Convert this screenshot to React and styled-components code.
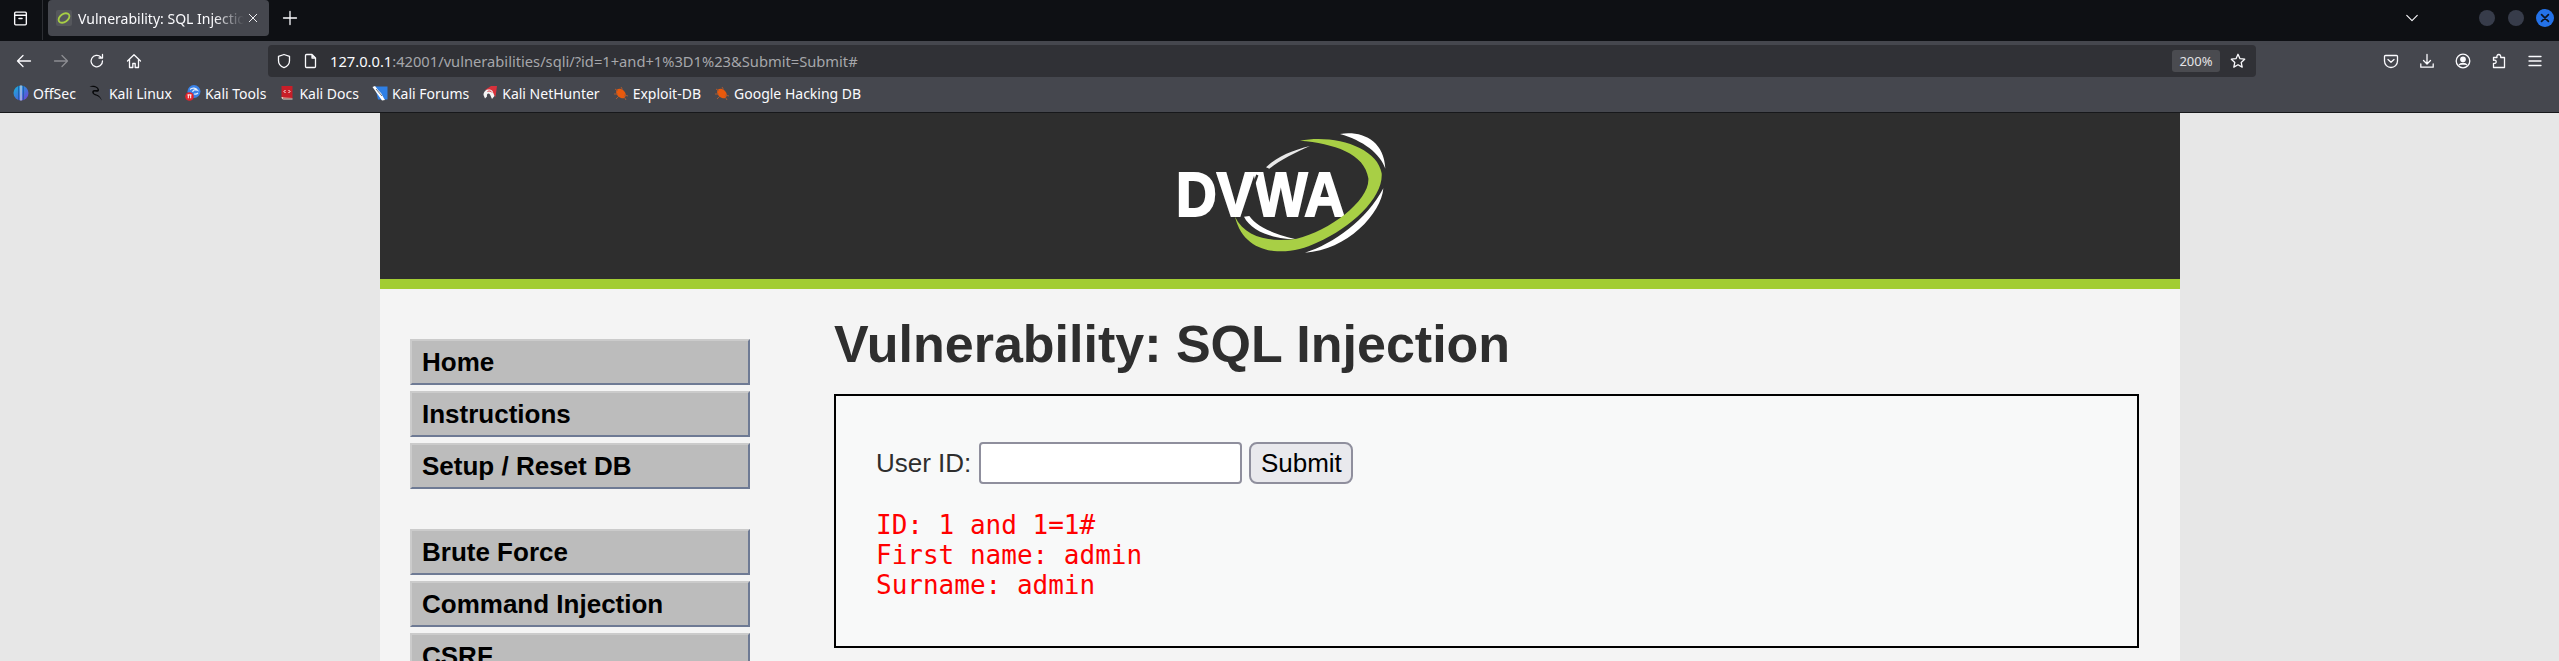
import React from "react";
import styled, { createGlobalStyle } from "styled-components";

const Global = createGlobalStyle`
  html, body { margin: 0; padding: 0; height: 100%; overflow: hidden; background: #e7e7e7; }
  #root { height: 100%; }
`;

const Shell = styled.div`
  height: 661px;
  display: flex;
  flex-direction: column;
  overflow: hidden;
`;

/* browser chrome */
const TabStrip = styled.div`
  height: 41px;
  background: #0e1014;
  display: flex;
  align-items: flex-start;
  color: #fbfbfe;
  font-family: "Noto Sans", sans-serif;
`;
const ViewButton = styled.div`
  width: 43px;
  height: 40px;
  box-sizing: border-box;
  border-right: 1px solid #2c2e33;
  padding: 10px 0 0 12px;
  flex: none;
`;
const Tab = styled.div`
  margin-left: 5px;
  width: 221px;
  height: 36px;
  box-sizing: border-box;
  padding: 0 8px;
  background: #45474e;
  border-radius: 4px;
  display: flex;
  align-items: center;
  flex: none;
`;
const TabTitle = styled.span`
  margin: 0 4px 0 6px;
  width: 166px;
  flex: none;
  overflow: hidden;
  white-space: nowrap;
  font-size: 14px;
  -webkit-mask-image: linear-gradient(to right, #000 82%, transparent);
  mask-image: linear-gradient(to right, #000 82%, transparent);
`;
const NewTab = styled.div`
  margin: 10px 0 0 13px;
  width: 16px;
  height: 16px;
  display: flex;
`;
const WindowControls = styled.div`
  margin-left: auto;
  height: 36px;
  display: flex;
  align-items: center;
  padding-right: 5px;
`;
const ListTabs = styled.div`
  display: flex;
  margin-right: 47px;
`;
const WindowDot = styled.div`
  width: ${(p) => (p.$close ? 18 : 16)}px;
  height: ${(p) => (p.$close ? 18 : 16)}px;
  border-radius: 50%;
  margin-left: ${(p) => (p.$close ? 12 : 13)}px;
  background: ${(p) => (p.$close ? "#2472e8" : "#373c4a")};
  display: flex;
  align-items: center;
  justify-content: center;
`;
const Toolbar = styled.div`
  height: 36px;
  background: #45474e;
  display: flex;
  align-items: flex-start;
  padding-top: 4px;
  box-sizing: border-box;
  color: #fbfbfe;
  font-family: "Noto Sans", sans-serif;
`;
const NavButtons = styled.div`
  width: 268px;
  flex: none;
  height: 32px;
  display: flex;
  align-items: center;
  padding-left: 16px;
  box-sizing: border-box;
  gap: 20.5px;
`;
const UrlBar = styled.div`
  width: 1988px;
  flex: none;
  height: 32px;
  background: #303136;
  border-radius: 4px;
  display: flex;
  align-items: center;
  padding-left: 8px;
  box-sizing: border-box;
  gap: 11px;
`;
const UrlText = styled.span`
  font-size: 14.7px;
  color: #a6a7ab;
  white-space: nowrap;
  b { font-weight: 400; color: #fbfbfe; }
`;
const Zoom = styled.span`
  margin-left: auto;
  width: 48px;
  height: 22px;
  background: #4a4b50;
  border-radius: 3px;
  font-size: 13px;
  color: #e4e4e6;
  display: flex;
  align-items: center;
  justify-content: center;
`;
const StarSlot = styled.div`
  width: 36px;
  margin-left: -11px;
  display: flex;
  justify-content: center;
`;
const ToolIcons = styled.div`
  flex: 1;
  height: 32px;
  display: flex;
  align-items: center;
  justify-content: flex-end;
  gap: 20px;
  padding-right: 16px;
`;
const Bookmarks = styled.div`
  height: 36px;
  box-sizing: border-box;
  border-bottom: 1px solid #17181b;
  background: #45474e;
  display: flex;
  align-items: center;
  padding: 0 0 3px 13px;
  color: #fbfbfe;
  font-family: "Noto Sans", sans-serif;
  font-size: 14px;
`;
const Bookmark = styled.div`
  display: flex;
  align-items: center;
  gap: 4px;
  margin-right: 13px;
  white-space: nowrap;
`;

/* DVWA page */
const Page = styled.div`
  flex: 1;
  width: 1800px;
  margin-left: 380px;
  background: #f4f4f4;
  font-family: "Liberation Sans", Arial, sans-serif;
  overflow: hidden;
`;
const Header = styled.header`
  height: 149px;
  background: #2e2e2e;
  border-bottom: 10px solid #a2cd33;
  display: flex;
  justify-content: center;
  align-items: flex-start;
  padding-top: 17px;
`;
const Main = styled.div`
  display: flex;
  padding: 0 41px 0 30px;
`;
const Menu = styled.nav`
  width: 340px;
  flex: none;
  margin-top: 50px;
`;
const MenuGroup = styled.ul`
  list-style: none;
  margin: 0 0 40px;
  padding: 0;
`;
const MenuItem = styled.li`
  height: 46px;
  box-sizing: border-box;
  margin-bottom: 6px;
  padding-left: 10px;
  background: #bcbcbc;
  border-style: solid;
  border-width: 2px;
  border-color: #cbcbcb #6e7a94 #6e7a94 #cbcbcb;
  color: #000;
  font-size: 26px;
  font-weight: 700;
  line-height: 42px;
  white-space: nowrap;
`;
const Content = styled.main`
  margin-left: 84px;
  flex: 1;
`;
const Title = styled.h1`
  margin: 25px 0 20px;
  font-size: 52px;
  line-height: 60px;
  font-weight: 700;
  color: #2e2e2e;
`;
const Panel = styled.div`
  border: 2px solid #000;
  background: #f8f9f9;
  padding: 46px 40px;
`;
const Form = styled.form`
  display: flex;
  align-items: center;
  height: 42px;
  margin-bottom: 26px;
`;
const Label = styled.label`
  font-size: 26px;
  color: #2e2e2e;
  margin-right: 8px;
`;
const Input = styled.input`
  width: 263px;
  height: 42px;
  box-sizing: border-box;
  border: 2px solid #8f8f9d;
  border-radius: 4px;
  background: #fff;
  margin: 0 7px 0 0;
`;
const Button = styled.button`
  width: 104px;
  height: 42px;
  box-sizing: border-box;
  border: 2px solid #8f8f9d;
  border-radius: 8px;
  background: #e9e9ed;
  color: #000;
  font-family: "Liberation Sans", Arial, sans-serif;
  font-size: 26px;
  padding: 0;
`;
const Result = styled.pre`
  margin: 0;
  color: #f00;
  font-family: "DejaVu Sans Mono", monospace;
  font-size: 26px;
  line-height: 30px;
`;

const Ico = ({ children, size = 16, fill = "none", color = "#fbfbfe", sw = 1.3 }) => (
  <svg
    width={size}
    height={size}
    viewBox="0 0 16 16"
    fill={fill}
    stroke={color}
    strokeWidth={sw}
    strokeLinecap="round"
    strokeLinejoin="round"
    style={{ flex: "none", display: "block" }}
  >
    {children}
  </svg>
);

const Fav = ({ children }) => (
  <svg width="16" height="16" viewBox="0 0 16 16" style={{ flex: "none", display: "block" }}>
    {children}
  </svg>
);

const OffSecIcon = () => (
  <Fav>
    <defs>
      <linearGradient id="os" x1="0" x2="1" y1="0" y2="1">
        <stop offset="0" stopColor="#18b4d8" />
        <stop offset="0.55" stopColor="#3f74dc" />
        <stop offset="1" stopColor="#7a3bd0" />
      </linearGradient>
    </defs>
    <circle cx="8" cy="8" r="7.5" fill="url(#os)" />
    <path d="M5.500 1v14M10.500 1v14" stroke="#1c5a9e" strokeWidth="0.8" />
    <path d="M8 0.500v15" stroke="#cfd6e6" strokeWidth="1.2" />
  </Fav>
);
const KaliIcon = () => (
  <Fav>
    <path
      d="M0.500 1.500c2-1.200 5.500-1 7.500.5 1.700 1.300 3 3.500 1.200 4.600-1.300.8-3.200-.8-4.200.3-.8 1 .5 2 2.500 2.600 2.500.7 4.200 2.500 5.500 6-1.800-2.700-3.500-4.200-6-5-2.700-.9-4.500-2.500-3.500-4.500.9-1.600 3-1 4.300-.9 1 .1 1-1.200-.2-2.200C5.800 1.800 3 1.800.5 1.500z"
      fill="#08090b"
    />
  </Fav>
);
const ToolsIcon = () => (
  <Fav>
    <circle cx="9" cy="6.500" r="6.500" fill="#3a82e8" />
    <path d="M5 4.500c2.500-2.500 6-1.500 7.500.8-2.400-1-4.500-.6-4.800 1.700M9 9c1.500.3 3 0 4-1" stroke="#e4eefc" strokeWidth="1.200" fill="none" />
    <circle cx="4.500" cy="11.500" r="4.300" fill="#e3242b" />
    <path d="M3.300 9.800v3.500M5.700 9.800v3.500M2.500 9.900h4" stroke="#fff" strokeWidth="1" />
  </Fav>
);
const DocsIcon = () => (
  <Fav>
    <path d="M2.500 1h11v12.500h-9c-1.500 0-2-.8-2-2z" fill="#c81e28" />
    <path d="M2.500 12c0 1.500.8 2.500 2 2.500h9v-1h-9c-1 0-1-.7 0-1h9" fill="#e6d9c8" />
    <path d="M6.500 5 5 6.500 6.500 8M9.500 5 11 6.500 9.500 8" stroke="#fff" strokeWidth="1" fill="none" />
  </Fav>
);
const ForumsIcon = () => (
  <Fav>
    <path d="M3 1.500h12.500v13H6z" fill="#2f80e6" />
    <path d="M0.500 2 3 1l3 4 3 3 3 5.500 1 1.500-3 .5-3.500-5L4 7z" fill="#fff" />
    <path d="M4 4l6 7" stroke="#45474e" strokeWidth="0.8" />
  </Fav>
);
const HunterIcon = () => (
  <Fav>
    <path d="M3 5 9 1h6l-1.500 11L10 7.500z" fill="#d8323c" />
    <path d="M1.500 10C1.500 5 7 3 10.500 6l2 5-2.500 3-2-4.500C6.500 7.500 4.500 8.500 5 11.500L3 13.500z" fill="#f4f4f4" />
    <path d="M5.500 6.500c1.800-1 3.500-.5 4.500 1" stroke="#d8323c" strokeWidth="1" fill="none" />
  </Fav>
);
const BugIcon = () => (
  <Fav>
    <ellipse cx="8" cy="8.500" rx="4" ry="5.500" fill="#e9590c" transform="rotate(-45 8 8.500)" />
    <path d="M2 4l3 2M1 9h4M3 14l3-3M13 15l-2-3.500M15 11l-4-1M8 2l1.500 2.500" stroke="#a85a32" strokeWidth="1" />
  </Fav>
);

const Logo = () => (
  <svg width="220" height="126" viewBox="150 60 660 378" style={{ display: "block", filter: "blur(0.7px)" }}>
    <path d="M660 72C725 62 792 90 796 176 780 130 730 92 660 72Z" fill="#fff" />
    <path d="M790 235C785 310 680 422 555 428 640 402 740 330 790 235Z" fill="#fff" />
    <path d="M570 108C520 120 470 140 438 172L448 176C480 150 530 125 570 108Z" fill="#e8e8e8" />
    <text
      x="168"
      y="317"
      fontFamily="'Liberation Sans', Arial, sans-serif"
      fontWeight="700"
      fontSize="190"
      fill="#fff"
      stroke="#fff"
      strokeWidth="6"
      textLength="507"
      lengthAdjust="spacingAndGlyphs"
    >
      DVWA
    </text>
    <path d="M412 195 366 322" stroke="#2e2e2e" strokeWidth="7" />
    <path d="M372 320C392 360 450 386 528 388 460 372 410 350 388 318Z" fill="#fff" />
    <path
      d="M540 92C640 72 772 110 785 190 790 260 700 350 590 398 510 438 375 445 345 320 375 382 450 398 530 386 630 362 750 270 745 205 735 130 640 100 540 92Z"
      fill="#a8cf45"
    />
  </svg>
);

export default function App() {
  return (
    <Shell>
      <Global />
      <TabStrip>
        <ViewButton>
          <Ico size={17}>
            <path d="M3.500 2h9a1 1 0 0 1 1 1v2h-11V3a1 1 0 0 1 1-1zM2.500 5h11v8a1 1 0 0 1-1 1h-9a1 1 0 0 1-1-1zM6.500 8h3" />
          </Ico>
        </ViewButton>
        <Tab>
          <svg width="16" height="16" viewBox="0 0 16 16" style={{ flex: "none" }}>
            <rect width="16" height="16" rx="2" fill="#55575c" />
            <ellipse cx="8" cy="8" rx="6" ry="4" fill="none" stroke="#a8cf45" strokeWidth="1.800" transform="rotate(-35 8 8)" />
          </svg>
          <TabTitle>Vulnerability: SQL Injection</TabTitle>
          <Ico size={10} sw={1.500}>
            <path d="M2 2l12 12M14 2 2 14" />
          </Ico>
        </Tab>
        <NewTab>
          <Ico size={16}>
            <path d="M8 1.500v13M1.500 8h13" />
          </Ico>
        </NewTab>
        <WindowControls>
          <ListTabs>
            <Ico size={14}>
              <path d="M2 5l6 6 6-6" />
            </Ico>
          </ListTabs>
          <WindowDot />
          <WindowDot />
          <WindowDot $close>
            <Ico size={10} color="#0c1420" sw={2.600}>
              <path d="M2.500 2.500l11 11M13.500 2.500l-11 11" />
            </Ico>
          </WindowDot>
        </WindowControls>
      </TabStrip>

      <Toolbar>
        <NavButtons>
          <Ico>
            <path d="M14.500 8h-13M7 2.500 1.500 8 7 13.500" />
          </Ico>
          <Ico color="#8c8d92">
            <path d="M1.500 8h13M9 2.500 14.500 8 9 13.500" />
          </Ico>
          <Ico>
            <path d="M13.500 8a5.700 5.700 0 1 1-1.700-4M13.500 1.500V5H10" />
          </Ico>
          <Ico>
            <path d="M1.500 8 8 1.800 14.500 8M3.500 6.500v8h3.300v-4h2.400v4h3.300v-8" />
          </Ico>
        </NavButtons>
        <UrlBar>
          <Ico>
            <path d="M8 1.500 2.500 3.300v4.500c0 3.500 2.500 5.800 5.500 6.800 3-1 5.500-3.300 5.500-6.800V3.300z" />
          </Ico>
          <Ico>
            <path d="M3.500 1.500h5.500l3.500 3.500v8.500a1 1 0 0 1-1 1h-8a1 1 0 0 1-1-1V2.500a1 1 0 0 1 1-1zM9 1.500V5h3.500" />
          </Ico>
          <UrlText>
            <b>127.0.0.1</b>:42001/vulnerabilities/sqli/?id=1+and+1%3D1%23&amp;Submit=Submit#
          </UrlText>
          <Zoom>200%</Zoom>
          <StarSlot>
            <Ico>
              <path d="M8 1.300l2 4.400 4.700.5-3.500 3.200 1 4.700L8 11.700l-4.200 2.400 1-4.700L1.300 6.200 6 5.700z" />
            </Ico>
          </StarSlot>
        </UrlBar>
        <ToolIcons>
          <Ico>
            <path d="M2.500 2.500h11a1 1 0 0 1 1 1v4.500a6.500 6.500 0 0 1-13 0V3.500a1 1 0 0 1 1-1zM5 6.500 8 9.300l3-2.800" />
          </Ico>
          <Ico>
            <path d="M8 1.500v9M4.500 7.500 8 11l3.500-3.500M1.800 11v3.200h12.400V11" />
          </Ico>
          <Ico>
            <circle cx="8" cy="8" r="6.800" />
            <circle cx="8" cy="6.300" r="2.200" fill="#fbfbfe" />
            <path d="M4.300 11.800c1-2 6.400-2 7.400 0" fill="#fbfbfe" />
          </Ico>
          <Ico>
            <path d="M8 14.500H2.500v-4.200c1.500.5 2.700-.2 2.700-1.500S4 6.700 2.500 7.300V4.500H6C5.500 3 6.400 1.500 7.800 1.500S10 3 9.700 4.500h3.800v10z" />
          </Ico>
          <Ico>
            <path d="M2 3.500h12M2 8h12M2 12.500h12" />
          </Ico>
        </ToolIcons>
      </Toolbar>

      <Bookmarks>
        <Bookmark><OffSecIcon />OffSec</Bookmark>
        <Bookmark><KaliIcon />Kali Linux</Bookmark>
        <Bookmark><ToolsIcon />Kali Tools</Bookmark>
        <Bookmark><DocsIcon />Kali Docs</Bookmark>
        <Bookmark><ForumsIcon />Kali Forums</Bookmark>
        <Bookmark><HunterIcon />Kali NetHunter</Bookmark>
        <Bookmark><BugIcon />Exploit-DB</Bookmark>
        <Bookmark><BugIcon />Google Hacking DB</Bookmark>
      </Bookmarks>

      <Page>
        <Header>
          <Logo />
        </Header>
        <Main>
          <Menu>
            <MenuGroup>
              <MenuItem>Home</MenuItem>
              <MenuItem>Instructions</MenuItem>
              <MenuItem>Setup / Reset DB</MenuItem>
            </MenuGroup>
            <MenuGroup>
              <MenuItem>Brute Force</MenuItem>
              <MenuItem>Command Injection</MenuItem>
              <MenuItem>CSRF</MenuItem>
            </MenuGroup>
          </Menu>
          <Content>
            <Title>Vulnerability: SQL Injection</Title>
            <Panel>
              <Form onSubmit={(e) => e.preventDefault()}>
                <Label>User ID:</Label>
                <Input type="text" />
                <Button type="submit">Submit</Button>
              </Form>
              <Result>{"ID: 1 and 1=1#\nFirst name: admin\nSurname: admin"}</Result>
            </Panel>
          </Content>
        </Main>
      </Page>
    </Shell>
  );
}
